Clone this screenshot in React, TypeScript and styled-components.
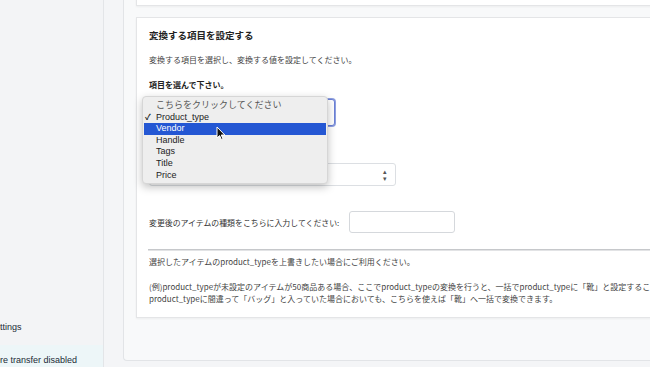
import styled, { createGlobalStyle } from "styled-components";

const GlobalStyle = createGlobalStyle`
  html, body {
    margin: 0;
    padding: 0;
    width: 650px;
    height: 367px;
    overflow: hidden;
    background: #f4f5f7;
    font-family: "Liberation Sans", "Noto Sans CJK JP", sans-serif;
  }
`;

const Page = styled.div`
  display: flex;
  width: 650px;
  height: 367px;
  overflow: hidden;
`;

const Sidebar = styled.nav`
  width: 103px;
  flex-shrink: 0;
  background: #f3f4f6;
  border-right: 1px solid #e3e5e8;
  display: flex;
  flex-direction: column;
  justify-content: flex-end;
  overflow: hidden;
`;

const NavItem = styled.div<{ $shift: number; $active?: boolean }>`
  height: 22px;
  box-sizing: border-box;
  display: flex;
  align-items: center;
  padding-top: ${p => (p.$active ? "8px" : "0")};
  margin-bottom: ${p => (p.$active ? "0" : "7px")};
  background: ${p => (p.$active ? "#edf6f8" : "transparent")};
  font-size: 9px;
  color: #212b36;
  white-space: nowrap;

  span {
    margin-left: ${p => p.$shift}px;
  }
`;

const Main = styled.main`
  flex: 1;
  padding-left: 19px;
  min-width: 0;
`;

const Panel = styled.section`
  margin-top: -30px;
  height: 391px;
  box-sizing: border-box;
  background: #f8f9fa;
  border: 1px solid #e2e4e7;
  border-right: none;
  border-radius: 4px 0 0 4px;
  padding: 0 0 0 12px;
  margin-right: -20px;
`;

const TopCard = styled.div`
  height: 34px;
  background: #fff;
  border: 1px solid #e4e5e7;
  border-top: none;
  border-right: none;
  box-shadow: 0 1px 2px rgba(0, 0, 0, 0.05);
`;

const Card = styled.div`
  margin-top: 11px;
  height: 301px;
  box-sizing: border-box;
  background: #fff;
  border: 1px solid #e4e5e7;
  border-right: none;
  box-shadow: 0 1px 2px rgba(0, 0, 0, 0.05);
  padding: 10px 0 0 12px;
  font-family: "Noto Sans CJK JP", "Liberation Sans", sans-serif;
  color: #333;
  white-space: nowrap;
`;

const Title = styled.h2`
  margin: 0;
  font-size: 9.5px;
  line-height: 14px;
  font-weight: 700;
  color: #222;
`;

const Text = styled.p<{ $top: number; $bold?: boolean }>`
  margin: ${p => p.$top}px 0 0;
  font-size: 8px;
  line-height: 12px;
  font-weight: ${p => (p.$bold ? 700 : 400)};
  color: ${p => (p.$bold ? "#222" : "#444")};
`;

const SelectWrap = styled.div<{ $top: number }>`
  position: relative;
  margin-top: ${p => p.$top}px;
  width: 186px;
`;

const SelectBox = styled.div<{ $focused?: boolean; $w: number; $h: number }>`
  width: ${p => p.$w}px;
  height: ${p => p.$h}px;
  box-sizing: border-box;
  border: 1px solid ${p => (p.$focused ? "#6b80d6" : "#dcdfe3")};
  box-shadow: ${p => (p.$focused ? "0 0 0 1px #8fa0e0" : "none")};
  border-radius: 3px;
  background: #fff;
  display: flex;
  align-items: center;
  justify-content: space-between;
  padding: 0 8px 0 9px;
  font-size: 8px;
  color: #333;
`;

const Arrows = styled.span`
  font-size: 7px;
  color: #555;
  line-height: 1;
  display: flex;
  flex-direction: column;
  align-items: center;
`;

const Menu = styled.ul`
  position: absolute;
  left: -7px;
  top: -3px;
  width: 186px;
  height: 88px;
  box-sizing: border-box;
  margin: 0;
  padding: 3px 1px 0;
  list-style: none;
  background: #eeeeee;
  border: 1px solid #d6d6d6;
  border-radius: 4px;
  box-shadow: 0 3px 8px rgba(0, 0, 0, 0.25);
  font-family: "Liberation Sans", "Noto Sans CJK JP", sans-serif;
  z-index: 2;
`;

const MenuItem = styled.li<{ $active?: boolean; $muted?: boolean }>`
  position: relative;
  height: 11.6px;
  line-height: 11.6px;
  padding-left: 12px;
  font-size: 9px;
  color: ${p => (p.$active ? "#fff" : p.$muted ? "#555" : "#222")};
  background: ${p => (p.$active ? "#2457d3" : "transparent")};
`;

const Check = styled.span`
  position: absolute;
  left: 1px;
  font-size: 8px;
  font-weight: 700;
`;

const Cursor = styled.svg`
  position: absolute;
  left: 67px;
  top: 27px;
  z-index: 3;
`;

const InputRow = styled.div`
  display: flex;
  align-items: center;
  gap: 10px;
  margin-top: 25px;
  font-size: 7.9px;
`;

const TextInput = styled.div`
  width: 106px;
  height: 22px;
  box-sizing: border-box;
  border: 1px solid #d5d8dc;
  border-radius: 3px;
  background: #fff;
`;

const Divider = styled.hr`
  margin: 16px 0 0 -1px;
  border: none;
  border-top: 1px solid #c6c8cb;
  height: 1px;
  background: #e2e3e5;
`;

const options = ["Product_type", "Vendor", "Handle", "Tags", "Title", "Price"];

function App() {
  return (
    <Page>
      <GlobalStyle />
      <Sidebar>
        <NavItem $shift={-11}>
          <span>Settings</span>
        </NavItem>
        <NavItem $shift={-13.5} $active>
          <span>Store transfer disabled</span>
        </NavItem>
      </Sidebar>
      <Main>
        <Panel>
          <TopCard />
          <Card>
            <Title>変換する項目を設定する</Title>
            <Text $top={12}>変換する項目を選択し、変換する値を設定してください。</Text>
            <Text $top={13} $bold>
              項目を選んで下さい。
            </Text>
            <SelectWrap $top={8}>
              <SelectBox $focused $w={186} $h={27}>
                Product_type
              </SelectBox>
              <Menu>
                <MenuItem $muted>こちらをクリックしてください</MenuItem>
                {options.map((o, i) => (
                  <MenuItem key={o} $active={o === "Vendor"}>
                    {i === 0 && <Check>✓</Check>}
                    {o}
                  </MenuItem>
                ))}
              </Menu>
              <Cursor width="10" height="15" viewBox="0 0 10 15">
                <path
                  d="M1 1 L1 12 L3.6 9.6 L5.4 13.6 L7 12.9 L5.3 9 L8.8 9 Z"
                  fill="#111"
                  stroke="#fff"
                  strokeWidth="1"
                  strokeLinejoin="round"
                />
              </Cursor>
            </SelectWrap>
            <Text $top={13} $bold>
              変換前の値を選んで下さい。
            </Text>
            <SelectWrap $top={12}>
              <SelectBox $w={247} $h={23}>
                <span>変換前の値を選択してください:</span>
                <Arrows>
                  <span>▴</span>
                  <span>▾</span>
                </Arrows>
              </SelectBox>
            </SelectWrap>
            <InputRow>
              <span>変更後のアイテムの種類をこちらに入力してください:</span>
              <TextInput />
            </InputRow>
            <Divider />
            <Text $top={5}>選択したアイテムのproduct_typeを上書きしたい場合にご利用ください。</Text>
            <Text $top={13}>
              (例)product_typeが未設定のアイテムが50商品ある場合、ここでproduct_typeの変換を行うと、一括でproduct_typeに「靴」と設定することで
              <br />
              product_typeに間違って「バッグ」と入っていた場合においても、こちらを使えば「靴」へ一括で変換できます。
            </Text>
          </Card>
        </Panel>
      </Main>
    </Page>
  );
}

export default App;
